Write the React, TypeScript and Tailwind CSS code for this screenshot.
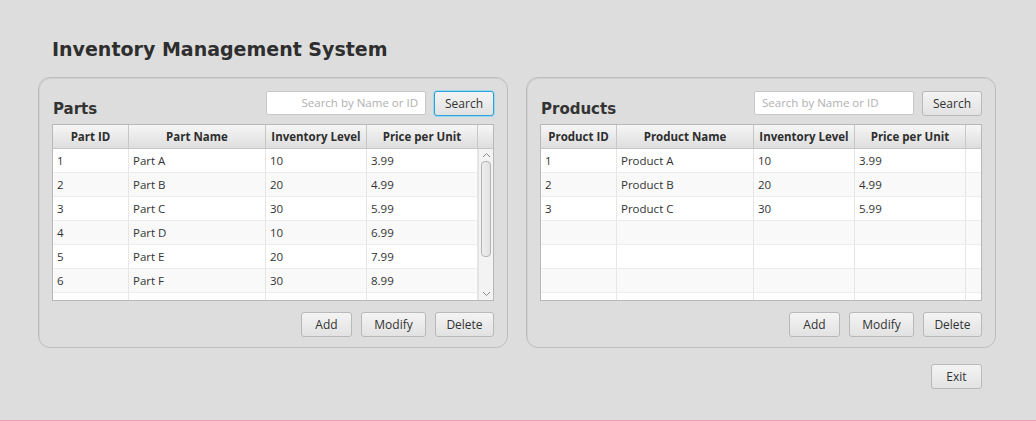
import React from "react";

type Row = string[];

const parts: Row[] = [
  ["1", "Part A", "10", "3.99"],
  ["2", "Part B", "20", "4.99"],
  ["3", "Part C", "30", "5.99"],
  ["4", "Part D", "10", "6.99"],
  ["5", "Part E", "20", "7.99"],
  ["6", "Part F", "30", "8.99"],
  ["", "", "", ""],
];

const products: Row[] = [
  ["1", "Product A", "10", "3.99"],
  ["2", "Product B", "20", "4.99"],
  ["3", "Product C", "30", "5.99"],
  ["", "", "", ""],
  ["", "", "", ""],
  ["", "", "", ""],
  ["", "", "", ""],
];

const widths = ["w-[76px]", "w-[137px]", "w-[101px]", "w-[111px]"];

function Btn({ label, w, focused }: { label: string; w: string; focused?: boolean }) {
  return (
    <button
      className={`${w} h-[25px] rounded-[3px] border text-[12px] text-[#333] bg-gradient-to-b from-[#f4f4f4] to-[#e2e2e2] ${
        focused ? "border-[#2aa3d8] shadow-[0_0_0_1px_#9fd6ef]" : "border-[#b9b9b9]"
      }`}
    >
      {label}
    </button>
  );
}

function Scrollbar() {
  return (
    <div className="w-[15px] h-full bg-[#f3f3f3] border-l border-[#e2e2e2] flex flex-col items-center">
      <svg width="9" height="6" viewBox="0 0 9 6" className="mt-[3px]">
        <path d="M1 5 L4.5 1.5 L8 5" fill="none" stroke="#8a8a8a" strokeWidth="1" />
      </svg>
      <div className="mt-[3px] w-[10px] h-[96px] rounded-[4px] border border-[#b4b4b4] bg-gradient-to-r from-[#eeeeee] to-[#e2e2e2]" />
      <div className="flex-1" />
      <svg width="9" height="6" viewBox="0 0 9 6" className="mb-[3px]">
        <path d="M1 1 L4.5 4.5 L8 1" fill="none" stroke="#8a8a8a" strokeWidth="1" />
      </svg>
    </div>
  );
}

function Table({ cols, rows, scroll }: { cols: string[]; rows: Row[]; scroll?: boolean }) {
  return (
    <div className="w-[442px] h-[177px] border border-[#b8b8b8] bg-white overflow-hidden">
      <div className="flex h-[24px] bg-gradient-to-b from-[#f6f6f6] to-[#dedede] border-b border-[#c6c6c6]">
        {cols.map((c, i) => (
          <div
            key={c}
            className={`${widths[i]} shrink-0 border-r border-[#c6c6c6] flex items-center justify-center font-bold text-[#2e2e2e]`}
          >
            {c}
          </div>
        ))}
        <div className="flex-1" />
      </div>
      <div className="flex h-[151px]">
        <div className="flex-1 overflow-hidden">
          {rows.map((r, ri) => (
            <div
              key={ri}
              className={`flex h-[24px] border-b border-[#ececec] ${ri % 2 ? "bg-[#f9f9f9]" : "bg-white"}`}
            >
              {r.map((v, i) => (
                <div
                  key={i}
                  className={`${widths[i]} shrink-0 border-r border-[#e6e6e6] pl-[4px] flex items-center`}
                >
                  {v}
                </div>
              ))}
              {!scroll && <div className="flex-1" />}
            </div>
          ))}
        </div>
        {scroll && <Scrollbar />}
      </div>
    </div>
  );
}

function Panel({
  title,
  cols,
  rows,
  scroll,
  rightAlignSearch,
  focusSearch,
}: {
  title: string;
  cols: string[];
  rows: Row[];
  scroll?: boolean;
  rightAlignSearch?: boolean;
  focusSearch?: boolean;
}) {
  return (
    <div className="w-[470px] h-[271px] rounded-[12px] border border-[#bdbdbd] shadow-[inset_1px_1px_0_#d0d0d0] pt-[12px] px-[13px]">
      <div className="flex items-end h-[26px]">
        <div className="font-['DejaVu_Sans',sans-serif] font-bold text-[15px] text-[#333] leading-[18px] mb-[-2px] ml-[1px]">
          {title}
        </div>
        <div className="flex-1" />
        <div
          className={`w-[160px] h-[24px] mb-[1px] bg-white border border-[#c8c8c8] rounded-[2px] flex items-center px-[7px] text-[11.5px] text-[#b0b0b0] ${
            rightAlignSearch ? "justify-end" : ""
          }`}
        >
          Search by Name or ID
        </div>
        <div className="w-[8px]" />
        <Btn label="Search" w="w-[60px]" focused={focusSearch} />
      </div>
      <div className="mt-[8px]">
        <Table cols={cols} rows={rows} scroll={scroll} />
      </div>
      <div className="flex justify-end gap-[9px] mt-[11px]">
        <Btn label="Add" w="w-[51px]" />
        <Btn label="Modify" w="w-[65px]" />
        <Btn label="Delete" w="w-[59px]" />
      </div>
    </div>
  );
}

export default function App() {
  return (
    <div className="w-[1036px] h-[421px] bg-[#dddddd] border-b border-[#e8a2b6] font-['Open_Sans',sans-serif] text-[11.5px] text-[#333] pl-[38px] pt-[37px] overflow-hidden">
      <h1 className="font-['DejaVu_Sans',sans-serif] font-bold text-[19px] leading-[24px] text-[#2e2e2e] ml-[14px]">
        Inventory Management System
      </h1>
      <div className="flex gap-[18px] mt-[16px]">
        <Panel
          title="Parts"
          cols={["Part ID", "Part Name", "Inventory Level", "Price per Unit"]}
          rows={parts}
          scroll
          rightAlignSearch
          focusSearch
        />
        <Panel
          title="Products"
          cols={["Product ID", "Product Name", "Inventory Level", "Price per Unit"]}
          rows={products}
        />
      </div>
      <div className="flex justify-end w-[944px] mt-[16px]">
        <Btn label="Exit" w="w-[51px]" />
      </div>
    </div>
  );
}
